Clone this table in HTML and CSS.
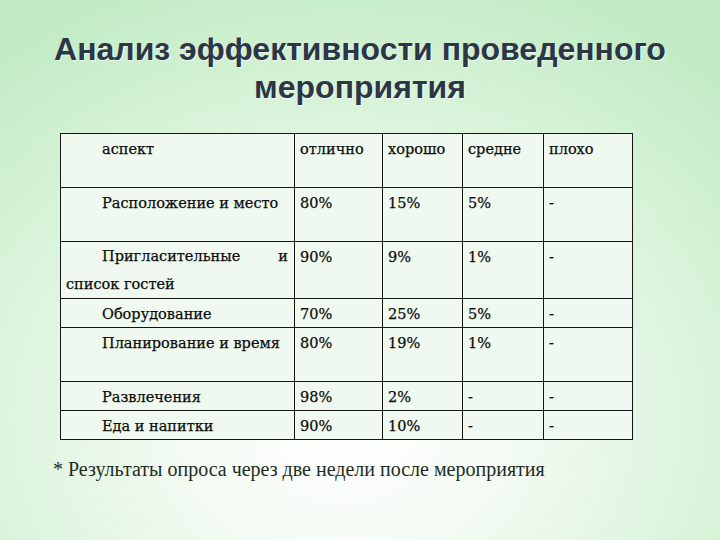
FILE: index.html
```html
<!DOCTYPE html>
<html lang="ru">
<head>
<meta charset="utf-8">
<link rel="stylesheet" href="styles.css">
</head>
<body>
<div class="slide">
  <h1 class="title">Анализ эффективности проведенного<br>мероприятия</h1>
  <table class="survey">
    <colgroup>
      <col class="c-aspect"><col class="c-a"><col class="c-b"><col class="c-c"><col class="c-d">
    </colgroup>
    <tr class="tall">
      <td class="aspect">аспект</td><td>отлично</td><td>хорошо</td><td>средне</td><td>плохо</td>
    </tr>
    <tr class="tall">
      <td class="aspect">Расположение и место</td><td>80%</td><td>15%</td><td>5%</td><td>-</td>
    </tr>
    <tr class="wrap">
      <td class="aspect just">Пригласительные и список гостей</td><td>90%</td><td>9%</td><td>1%</td><td>-</td>
    </tr>
    <tr class="short">
      <td class="aspect">Оборудование</td><td>70%</td><td>25%</td><td>5%</td><td>-</td>
    </tr>
    <tr class="tall">
      <td class="aspect">Планирование и время</td><td>80%</td><td>19%</td><td>1%</td><td>-</td>
    </tr>
    <tr class="short">
      <td class="aspect">Развлечения</td><td>98%</td><td>2%</td><td>-</td><td>-</td>
    </tr>
    <tr class="short last">
      <td class="aspect">Еда и напитки</td><td>90%</td><td>10%</td><td>-</td><td>-</td>
    </tr>
  </table>
  <p class="note">* Результаты опроса через две недели после мероприятия</p>
</div>
</body>
</html>
```
FILE: styles.css
```css
html, body {
  margin: 0;
  padding: 0;
}
body {
  width: 720px;
  height: 540px;
  overflow: hidden;
}
.slide {
  width: 720px;
  height: 540px;
  box-sizing: border-box;
  padding-top: 30px;
  display: flex;
  flex-direction: column;
  align-items: flex-start;
  background: radial-gradient(ellipse 75% 85% at 48% 78%, #ffffff 0%, #f4fbf4 30%, #d8f3d9 70%, #c3ecc6 100%);
}
.title {
  align-self: stretch;
  margin: 0;
  text-align: center;
  font-family: "Liberation Sans", Arial, sans-serif;
  font-weight: bold;
  font-size: 32px;
  line-height: 38px;
  color: #2c3645;
  text-shadow: 1px 1px 1px rgba(255,255,255,0.7);
}
.survey {
  margin: 27px 0 0 60px;
  border-collapse: collapse;
  table-layout: fixed;
  width: 573px;
  background: #eff9ef;
  font-family: "DejaVu Serif", serif;
  font-size: 14.5px;
  color: #0c0c0c;
}
.c-aspect { width: 234px; }
.c-a { width: 88px; }
.c-b { width: 80px; }
.c-c { width: 81px; }
.c-d { width: 89px; }
.survey td {
  border: 1px solid #151515;
  vertical-align: top;
  padding: 2px 5px 0 5px;
  line-height: 26px;
  -webkit-text-stroke: 0.25px #0c0c0c;
}
.survey td.aspect {
  text-indent: 36px;
  padding-left: 5px;
  padding-right: 6px;
}
.survey td.just {
  text-align: justify;
}
.tall td { height: 51px; }
.short td { height: 24px; }
.last td { height: 23px; }
.wrap td { height: 53px; }
.wrap td.aspect { line-height: 28px; padding-top: 0; height: 55px; }
.note {
  margin: 18px 0 0 53px;
  font-family: "Liberation Serif", "Times New Roman", serif;
  font-size: 20px;
  line-height: 22px;
  color: #1e2c1f;
}
```
